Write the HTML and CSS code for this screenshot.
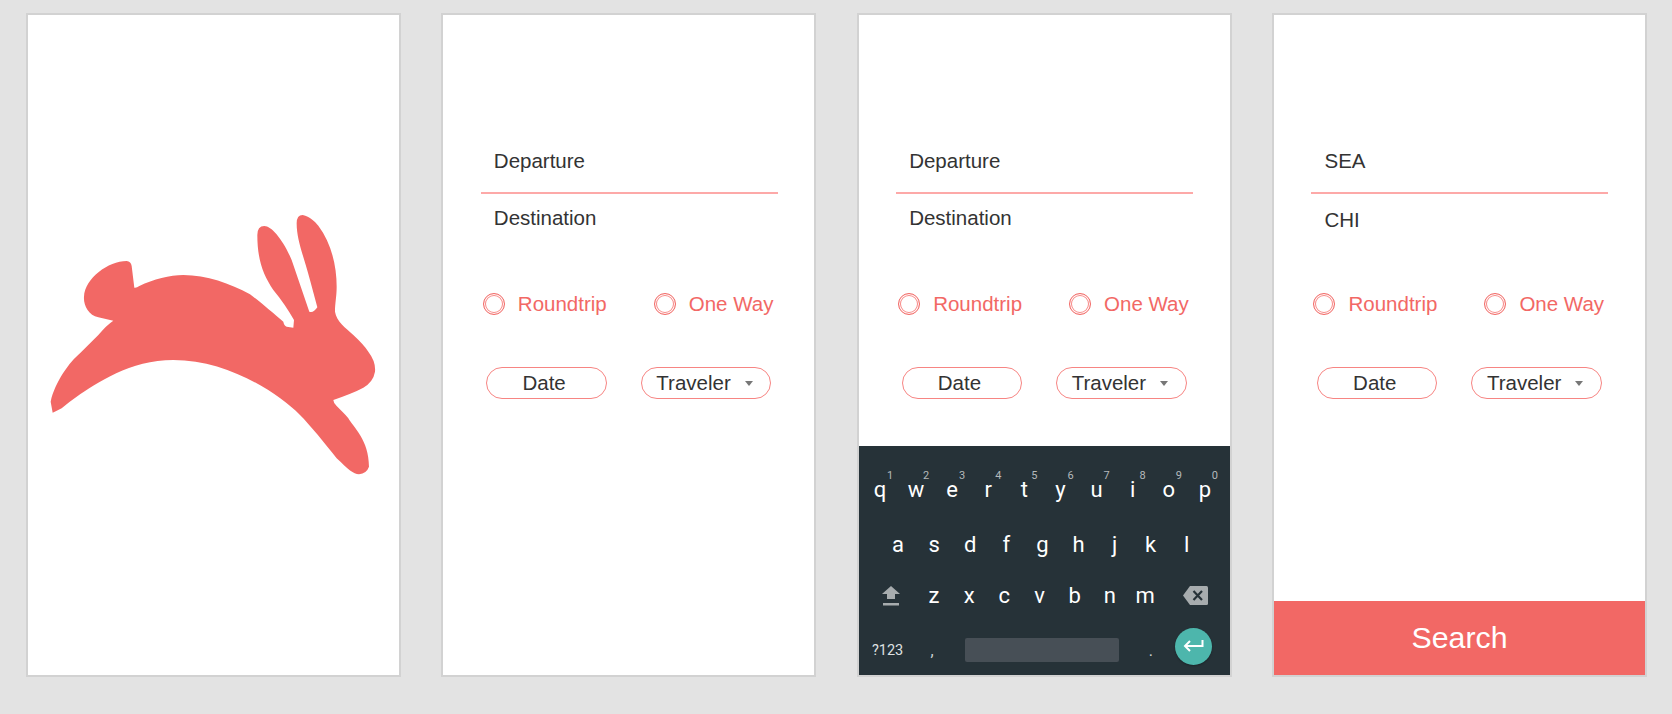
FILE: index.html
```
<!DOCTYPE html>
<html lang="en">
<head>
<meta charset="utf-8">
<title>Travel search screens</title>
<link rel="stylesheet" href="styles.css">
</head>
<body>
<main class="board">
  <section class="screen screen--splash">
    <svg class="rabbit" viewBox="90 75 980 780" aria-hidden="true"><path d="M320 213Q333 215 335 228L343 293Q350 294 358 288C400 268 450 255 490 255C560 255 630 280 690 313C720 335 760 370 790 395Q792 407 800 410L820 413L822 390C805 360 785 330 760 300C730 255 712 210 712 135Q712 108 733 108C755 108 790 150 815 210L868 365Q880 370 892 352L870 270C850 195 830 150 830 100Q830 75 848 75C870 80 885 95 895 107C935 160 950 230 950 290C950 320 945 340 945 365C950 395 975 412 1000 435C1020 453 1035 470 1045 485Q1068 515 1065 545Q1060 575 1030 593C1005 606 975 617 940 630Q940 638 950 648C965 663 975 672 985 685C1000 712 1047 750 1047 830Q1040 850 1017 853C1000 853 985 838 950 805C915 760 870 705 840 675C770 605 620 510 460 510C330 510 230 580 170 620Q145 637 125 655Q110 663 98 668L92 635C105 575 150 515 180 490L235 435Q260 405 280 392L235 382C205 375 190 345 192 320C195 265 265 213 320 213Z"/></svg>
  </section>

  <section class="screen">
    <div class="form">
      <div class="field field--from">Departure</div>
      <div class="field field--to">Destination</div>
      <div class="trip">
        <span class="radio"></span><span class="trip-label">Roundtrip</span>
        <span class="radio radio--second"></span><span class="trip-label">One Way</span>
      </div>
      <div class="pills">
        <div class="pill pill--date">Date</div>
        <div class="pill pill--traveler">Traveler<span class="caret"></span></div>
      </div>
    </div>
  </section>

  <section class="screen">
    <div class="form">
      <div class="field field--from">Departure</div>
      <div class="field field--to">Destination</div>
      <div class="trip">
        <span class="radio"></span><span class="trip-label">Roundtrip</span>
        <span class="radio radio--second"></span><span class="trip-label">One Way</span>
      </div>
      <div class="pills">
        <div class="pill pill--date">Date</div>
        <div class="pill pill--traveler">Traveler<span class="caret"></span></div>
      </div>
    </div>
    <div class="keyboard">
      <div class="kb-row kb-row--top">
        <span class="key">q<sup class="num">1</sup></span><span class="key">w<sup class="num">2</sup></span><span class="key">e<sup class="num">3</sup></span><span class="key">r<sup class="num">4</sup></span><span class="key">t<sup class="num">5</sup></span><span class="key">y<sup class="num">6</sup></span><span class="key">u<sup class="num">7</sup></span><span class="key">i<sup class="num">8</sup></span><span class="key">o<sup class="num">9</sup></span><span class="key">p<sup class="num">0</sup></span>
      </div>
      <div class="kb-row kb-row--home">
        <span class="key">a</span><span class="key">s</span><span class="key">d</span><span class="key">f</span><span class="key">g</span><span class="key">h</span><span class="key">j</span><span class="key">k</span><span class="key">l</span>
      </div>
      <div class="kb-row kb-row--shift">
        <span class="shift"><svg width="18" height="20" viewBox="0 0 18 20" aria-hidden="true"><path fill="#a7acae" d="M9 0L18 8H13V13H5V8H0ZM1 17H17V19.5H1Z"/></svg></span>
        <span class="key key--narrow">z</span><span class="key key--narrow">x</span><span class="key key--narrow">c</span><span class="key key--narrow">v</span><span class="key key--narrow">b</span><span class="key key--narrow">n</span><span class="key key--narrow">m</span>
        <svg class="backspace" width="25" height="19" viewBox="0 0 25 19" aria-hidden="true"><path fill="#a7acae" d="M7 0H23.5Q25 0 25 1.5V17.5Q25 19 23.5 19H7L0 9.5Z"/><path stroke="#263238" stroke-width="2.2" fill="none" d="M10.5 5L19 14M19 5L10.5 14"/></svg>
      </div>
      <div class="kb-row kb-row--bottom">
        <span class="sym">?123</span>
        <span class="punct punct--comma">,</span>
        <span class="space"></span>
        <span class="punct punct--dot">.</span>
        <span class="enter"><svg width="21" height="13" viewBox="0 0 21 13" aria-hidden="true"><path fill="none" stroke="#fff" stroke-width="2" d="M19.5 0V6H2M7 1L2 6L7 11"/></svg></span>
      </div>
    </div>
  </section>

  <section class="screen">
    <div class="form">
      <div class="field field--from">SEA</div>
      <div class="field field--to field--filled">CHI</div>
      <div class="trip">
        <span class="radio"></span><span class="trip-label">Roundtrip</span>
        <span class="radio radio--second"></span><span class="trip-label">One Way</span>
      </div>
      <div class="pills">
        <div class="pill pill--date">Date</div>
        <div class="pill pill--traveler">Traveler<span class="caret"></span></div>
      </div>
    </div>
    <div class="search">Search</div>
  </section>
</main>
</body>
</html>
```

FILE: styles.css
```
* { box-sizing: border-box; }

html, body {
  margin: 0;
  height: 100%;
  background: #e3e3e3;
}

body {
  font-family: "Liberation Sans", Arial, sans-serif;
  color: #333;
  overflow: hidden;
}

.board {
  display: flex;
  gap: 40.33px;
  padding: 13px 0 0 26px;
}

.screen {
  display: flex;
  flex-direction: column;
  flex: none;
  width: 375px;
  height: 664px;
  background: #fff;
  border: 2px solid #d2d2d2;
}

.screen--splash {
  padding: 200px 0 0 22px;
}

.rabbit {
  display: block;
  width: 326.67px;
  height: 260px;
  fill: #f26865;
}

.form {
  padding: 134px 36.5px 0 37.5px;
  font-size: 20.5px;
  line-height: 24px;
}

.field { padding-left: 13px; }

.field--from {
  height: 45px;
  padding-bottom: 19px;
  border-bottom: 2px solid #fda9a8;
}

.field--to {
  height: 36px;
  padding-top: 12px;
}

.field--filled { padding-top: 14px; }

.trip {
  display: flex;
  align-items: center;
  margin-top: 62px;
  padding-left: 2px;
  color: #f26865;
}

.radio {
  flex: none;
  width: 22px;
  height: 22px;
  margin-right: 13px;
  border: 1px solid #f26865;
  border-radius: 50%;
  box-shadow: inset 0 0 0 1px #fff, inset 0 0 0 2px #f88a88;
}

.radio--second { margin-left: 47px; }

.pills {
  display: flex;
  margin-top: 51px;
  padding-left: 5.5px;
  gap: 34px;
}

.pill {
  display: flex;
  align-items: center;
  height: 32px;
  border: 1px solid #f78583;
  border-radius: 16px;
}

.pill--date {
  justify-content: center;
  width: 120.5px;
  padding-right: 5px;
}

.pill--traveler {
  width: 130.5px;
  padding-left: 14.5px;
}

.caret {
  width: 0;
  height: 0;
  margin-left: 14px;
  border-style: solid;
  border-width: 5px 4.5px 0;
  border-color: #777 transparent transparent;
}

.keyboard {
  flex: none;
  height: 229px;
  margin-top: auto;
  padding-top: 16px;
  background: #263238;
  color: #fff;
  font-family: Roboto, "Liberation Sans", sans-serif;
  font-size: 22px;
}

.kb-row {
  display: flex;
  align-items: center;
}

.kb-row--top { height: 55px; padding-left: 3.3px; }
.kb-row--home { height: 55px; padding-left: 21.3px; }
.kb-row--shift { height: 47px; }
.kb-row--bottom { height: 56px; padding: 6px 0 0 13.3px; }

.key {
  position: relative;
  flex: none;
  width: 36.1px;
  text-align: center;
  line-height: 26px;
}

.key--narrow { width: 35.2px; }

.num {
  position: absolute;
  top: -8px;
  left: calc(50% + 6px);
  width: 8px;
  font-size: 11px;
  line-height: 13px;
  color: #b4b9bb;
  vertical-align: baseline;
}

.shift {
  display: flex;
  flex: none;
  width: 57.7px;
  padding-left: 23.3px;
}

.backspace {
  flex: none;
  margin-left: 20px;
}

.sym {
  flex: none;
  width: 32px;
  font-size: 14.5px;
  color: #dfe1e2;
}

.punct {
  flex: none;
  width: 20px;
  text-align: center;
  font-size: 16px;
  color: #cfd3d5;
}

.punct--comma { margin-left: 18px; }
.punct--dot { margin-left: 22px; }

.space {
  flex: none;
  width: 154px;
  height: 24px;
  margin-left: 23px;
  background: #474f56;
  border-radius: 2px;
}

.enter {
  display: flex;
  flex: none;
  align-items: center;
  justify-content: center;
  width: 37px;
  height: 37px;
  margin: 0 0 8px 14px;
  background: #4db6ac;
  border-radius: 50%;
  box-shadow: 0 1px 2px rgba(0, 0, 0, .3);
}

.search {
  flex: none;
  height: 74px;
  margin-top: auto;
  background: #f26865;
  color: #fff;
  font-size: 30.3px;
  line-height: 74px;
  text-align: center;
}
```
